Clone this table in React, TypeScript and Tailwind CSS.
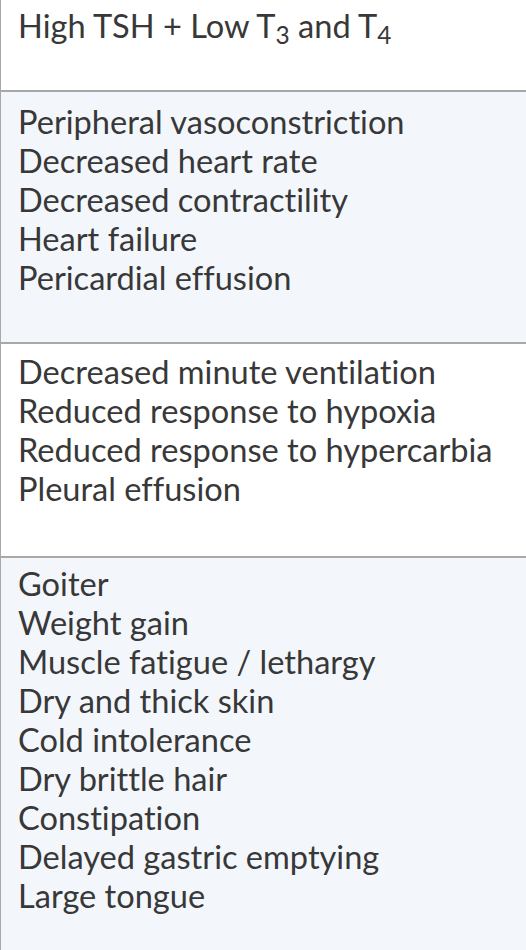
const sections: { bg: string; lines: React.ReactNode[]; pt: string; pb: string }[] = [
  {
    bg: 'bg-white',
    pt: 'pt-[6px]',
    pb: 'pb-[45px]',
    lines: [
      <>
        High TSH + Low T<sub className="text-[0.75em]">3</sub> and T<sub className="text-[0.75em]">4</sub>
      </>,
    ],
  },
  {
    bg: 'bg-[#f3f7fc]',
    pt: 'pt-[10px]',
    pb: 'pb-[45px]',
    lines: [
      'Peripheral vasoconstriction',
      'Decreased heart rate',
      'Decreased contractility',
      'Heart failure',
      'Pericardial effusion',
    ],
  },
  {
    bg: 'bg-white',
    pt: 'pt-[8px]',
    pb: 'pb-[48px]',
    lines: [
      'Decreased minute ventilation',
      'Reduced response to hypoxia',
      'Reduced response to hypercarbia',
      'Pleural effusion',
    ],
  },
  {
    bg: 'bg-[#f3f7fc]',
    pt: 'pt-[6px]',
    pb: 'pb-[45px]',
    lines: [
      'Goiter',
      'Weight gain',
      'Muscle fatigue / lethargy',
      'Dry and thick skin',
      'Cold intolerance',
      'Dry brittle hair',
      'Constipation',
      'Delayed gastric emptying',
      'Large tongue',
    ],
  },
]

export default function App() {
  return (
    <div className="h-[950px] w-[526px] overflow-hidden border-l border-[#a8a8a8] bg-[#f3f7fc] font-['Lato',sans-serif] text-[32.6px] leading-[39px] text-[#383838] [font-variant-ligatures:none]">
      {sections.map((s, i) => (
        <div
          key={i}
          className={`${s.bg} ${s.pt} ${s.pb} pl-[17px] ${i > 0 ? 'border-t-2 border-[#a8a8a8]' : ''}`}
        >
          {s.lines.map((line, j) => (
            <p key={j} className="whitespace-nowrap">{line}</p>
          ))}
        </div>
      ))}
    </div>
  )
}
